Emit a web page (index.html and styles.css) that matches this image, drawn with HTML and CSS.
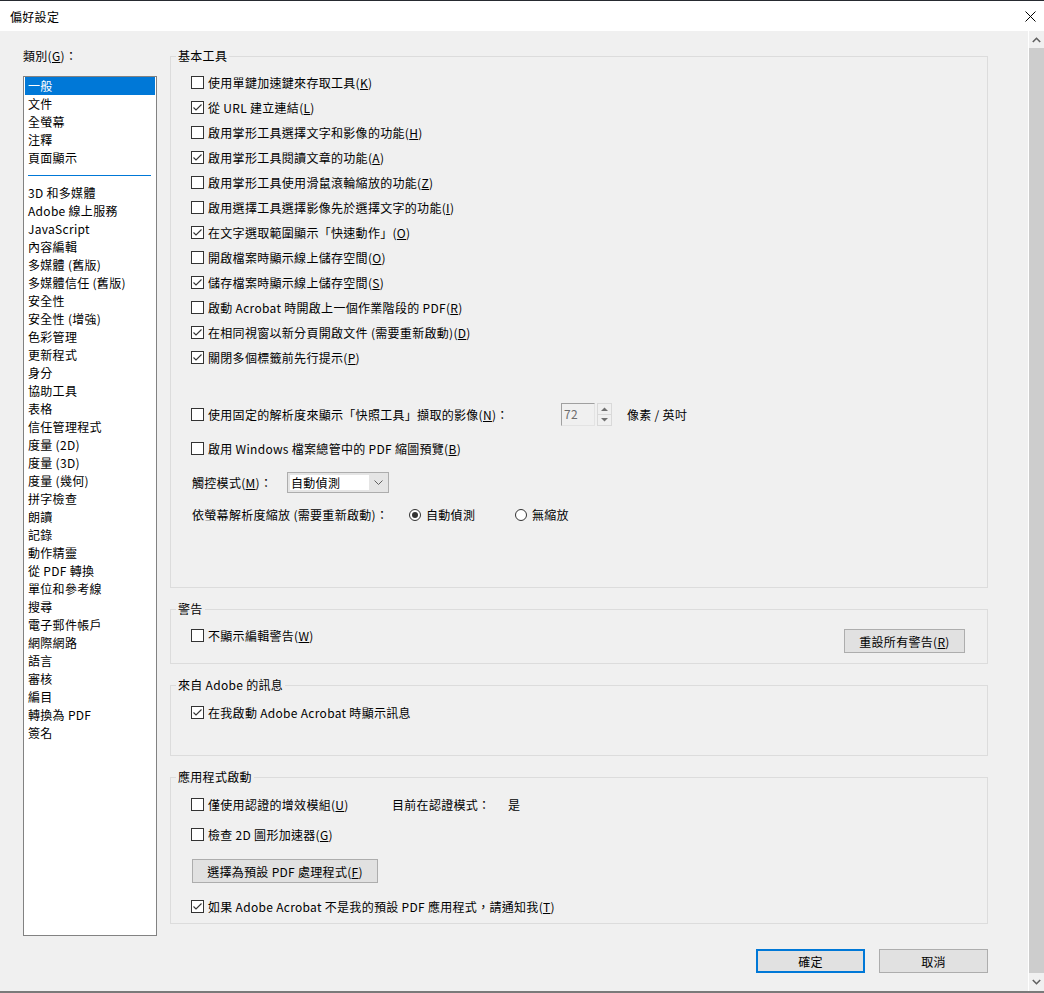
FILE: index.html
```html
<!DOCTYPE html>
<html lang="zh-Hant">
<head>
<meta charset="utf-8">
<title>偏好設定</title>
<link rel="stylesheet" href="styles.css">
</head>
<body>
<div class="window">
  <div class="titlebar">
    <span class="title">偏好設定</span>
    <span class="close"><svg width="11" height="11" viewBox="0 0 11 11"><path d="M0.5 0.5L10.5 10.5M10.5 0.5L0.5 10.5" stroke="#000" stroke-width="1" fill="none"/></svg></span>
  </div>
  <div class="client">
    <div class="main">
      <div class="left">
        <div class="cat-label">類別(<u>G</u>)：</div>
        <div class="listbox">
          <div class="item sel">一般</div>
          <div class="item">文件</div>
          <div class="item">全螢幕</div>
          <div class="item">注釋</div>
          <div class="item">頁面顯示</div>
          <div class="sep"><span class="sep-line"></span></div>
          <div class="item">3D 和多媒體</div>
          <div class="item">Adobe 線上服務</div>
          <div class="item">JavaScript</div>
          <div class="item">內容編輯</div>
          <div class="item">多媒體 (舊版)</div>
          <div class="item">多媒體信任 (舊版)</div>
          <div class="item">安全性</div>
          <div class="item">安全性 (增強)</div>
          <div class="item">色彩管理</div>
          <div class="item">更新程式</div>
          <div class="item">身分</div>
          <div class="item">協助工具</div>
          <div class="item">表格</div>
          <div class="item">信任管理程式</div>
          <div class="item">度量 (2D)</div>
          <div class="item">度量 (3D)</div>
          <div class="item">度量 (幾何)</div>
          <div class="item">拼字檢查</div>
          <div class="item">朗讀</div>
          <div class="item">記錄</div>
          <div class="item">動作精靈</div>
          <div class="item">從 PDF 轉換</div>
          <div class="item">單位和參考線</div>
          <div class="item">搜尋</div>
          <div class="item">電子郵件帳戶</div>
          <div class="item">網際網路</div>
          <div class="item">語言</div>
          <div class="item">審核</div>
          <div class="item">編目</div>
          <div class="item">轉換為 PDF</div>
          <div class="item">簽名</div>
        </div>
      </div>

      <div class="right">
        <fieldset class="group">
          <legend>基本工具</legend>
          <div class="g1">
            <div class="row"><span class="cb"></span>使用單鍵加速鍵來存取工具(<u>K</u>)</div>
            <div class="row"><span class="cb on"><svg width="11" height="11" viewBox="0 0 11 11"><path d="M1.5 5.5L4 8L9.5 2.5" stroke="#333" stroke-width="1.1" fill="none"/></svg></span>從 URL 建立連結(<u>L</u>)</div>
            <div class="row"><span class="cb"></span>啟用掌形工具選擇文字和影像的功能(<u>H</u>)</div>
            <div class="row"><span class="cb on"><svg width="11" height="11" viewBox="0 0 11 11"><path d="M1.5 5.5L4 8L9.5 2.5" stroke="#333" stroke-width="1.1" fill="none"/></svg></span>啟用掌形工具閱讀文章的功能(<u>A</u>)</div>
            <div class="row"><span class="cb"></span>啟用掌形工具使用滑鼠滾輪縮放的功能(<u>Z</u>)</div>
            <div class="row"><span class="cb"></span>啟用選擇工具選擇影像先於選擇文字的功能(<u>I</u>)</div>
            <div class="row"><span class="cb on"><svg width="11" height="11" viewBox="0 0 11 11"><path d="M1.5 5.5L4 8L9.5 2.5" stroke="#333" stroke-width="1.1" fill="none"/></svg></span>在文字選取範圍顯示「快速動作」(<u>O</u>)</div>
            <div class="row"><span class="cb"></span>開啟檔案時顯示線上儲存空間(<u>O</u>)</div>
            <div class="row"><span class="cb on"><svg width="11" height="11" viewBox="0 0 11 11"><path d="M1.5 5.5L4 8L9.5 2.5" stroke="#333" stroke-width="1.1" fill="none"/></svg></span>儲存檔案時顯示線上儲存空間(<u>S</u>)</div>
            <div class="row"><span class="cb"></span>啟動 Acrobat 時開啟上一個作業階段的 PDF(<u>R</u>)</div>
            <div class="row"><span class="cb on"><svg width="11" height="11" viewBox="0 0 11 11"><path d="M1.5 5.5L4 8L9.5 2.5" stroke="#333" stroke-width="1.1" fill="none"/></svg></span>在相同視窗以新分頁開啟文件 (需要重新啟動)(<u>D</u>)</div>
            <div class="row"><span class="cb on"><svg width="11" height="11" viewBox="0 0 11 11"><path d="M1.5 5.5L4 8L9.5 2.5" stroke="#333" stroke-width="1.1" fill="none"/></svg></span>關閉多個標籤前先行提示(<u>P</u>)</div>

            <div class="row snap">
              <span class="snap-label"><span class="cb"></span>使用固定的解析度來顯示「快照工具」擷取的影像(<u>N</u>)：</span>
              <span class="spin-box">72</span>
              <span class="spin-btns">
                <span class="spin-btn"><svg width="7" height="4" viewBox="0 0 7 4"><path d="M0 4L3.5 0.5L7 4Z" fill="#707070"/></svg></span>
                <span class="spin-btn"><svg width="7" height="4" viewBox="0 0 7 4"><path d="M0 0L3.5 3.5L7 0Z" fill="#707070"/></svg></span>
              </span>
              <span class="unit">像素 / 英吋</span>
            </div>
            <div class="row win"><span class="cb"></span>啟用 Windows 檔案總管中的 PDF 縮圖預覽(<u>B</u>)</div>
            <div class="row touch">
              <span class="touch-label">觸控模式(<u>M</u>)：</span>
              <span class="combo"><span class="combo-val">自動偵測</span><svg class="combo-arrow" width="9" height="5" viewBox="0 0 9 5"><path d="M0.5 0.5L4.5 4.5L8.5 0.5" stroke="#606060" stroke-width="1" fill="none"/></svg></span>
            </div>
            <div class="row scale">
              <span class="scale-label">依螢幕解析度縮放 (需要重新啟動)：</span>
              <span class="radio-item first"><span class="radio on"><span class="dot"></span></span>自動偵測</span>
              <span class="radio-item"><span class="radio"></span>無縮放</span>
            </div>
          </div>
        </fieldset>

        <fieldset class="group gap">
          <legend>警告</legend>
          <div class="g2">
            <div class="row"><span class="cb"></span>不顯示編輯警告(<u>W</u>)</div>
            <button class="btn reset">重設所有警告(<u>R</u>)</button>
          </div>
        </fieldset>

        <fieldset class="group gap">
          <legend>來自 Adobe 的訊息</legend>
          <div class="g3">
            <div class="row"><span class="cb on"><svg width="11" height="11" viewBox="0 0 11 11"><path d="M1.5 5.5L4 8L9.5 2.5" stroke="#333" stroke-width="1.1" fill="none"/></svg></span>在我啟動 Adobe Acrobat 時顯示訊息</div>
          </div>
        </fieldset>

        <fieldset class="group gap">
          <legend>應用程式啟動</legend>
          <div class="g4">
            <div class="row">
              <span class="cert-label"><span class="cb"></span>僅使用認證的增效模組(<u>U</u>)</span>
              <span class="cert-mode">目前在認證模式：</span>
              <span>是</span>
            </div>
            <div class="row r2"><span class="cb"></span>檢查 2D 圖形加速器(<u>G</u>)</div>
            <button class="btn pdfbtn">選擇為預設 PDF 處理程式(<u>F</u>)</button>
            <div class="row r4"><span class="cb on"><svg width="11" height="11" viewBox="0 0 11 11"><path d="M1.5 5.5L4 8L9.5 2.5" stroke="#333" stroke-width="1.1" fill="none"/></svg></span>如果 Adobe Acrobat 不是我的預設 PDF 應用程式，請通知我(<u>T</u>)</div>
          </div>
        </fieldset>

        <div class="actions">
          <button class="btn dlg default">確定</button>
          <button class="btn dlg">取消</button>
        </div>
      </div>
    </div>
    <div class="scrollbar">
      <div class="sb-btn up"><svg width="9" height="6" viewBox="0 0 9 6"><path d="M0.8 5L4.5 1.3L8.2 5" stroke="#606060" stroke-width="1.6" fill="none"/></svg></div>
      <div class="sb-thumb"></div>
      <div class="sb-btn down"><svg width="9" height="6" viewBox="0 0 9 6"><path d="M0.8 1L4.5 4.7L8.2 1" stroke="#606060" stroke-width="1.6" fill="none"/></svg></div>
    </div>
  </div>
</div>
</body>
</html>
```

FILE: styles.css
```css
* { box-sizing: border-box; }
html, body { margin: 0; padding: 0; }
body {
  width: 1044px;
  height: 993px;
  overflow: hidden;
  background: #f0f0f0;
  font-family: "Noto Sans CJK TC", "Noto Sans", sans-serif;
  font-size: 12px;
  letter-spacing: 0.3px;
  color: #000;
}
u { text-decoration: underline; text-underline-offset: 1px; }

.window {
  display: flex;
  flex-direction: column;
  height: 993px;
  border-bottom: 2px solid #7a7a7a;
}
.titlebar {
  height: 31px;
  flex: none;
  background: #fff;
  border-top: 1px solid #262a30;
  display: flex;
  align-items: center;
  justify-content: space-between;
  padding-left: 10px;
}
.close {
  width: 28px;
  height: 30px;
  display: flex;
  align-items: center;
  justify-content: center;
}

.client { flex: 1; display: flex; min-height: 0; }
.main { flex: 1; display: flex; }

.scrollbar {
  width: 16px;
  border-left: 1px solid #fff;
  display: flex;
  flex-direction: column;
}
.sb-btn { height: 17px; display: flex; align-items: center; justify-content: center; }
.sb-btn.down { height: 18px; }
.sb-thumb { flex: 1; background: #cdcdcd; }

/* left */
.left {
  width: 134px;
  margin-left: 23px;
  padding-top: 17px;
  display: flex;
  flex-direction: column;
}
.cat-label { line-height: 16px; height: 16px; }
.listbox {
  margin-top: 12px;
  height: 860px;
  background: #fff;
  border: 1px solid #828282;
  padding: 0 1px;
}
.item {
  height: 18px;
  line-height: 18px;
  padding-left: 3px;
  white-space: nowrap;
}
.item.sel { background: #0078d7; color: #fff; }
.sep { height: 17px; display: flex; align-items: center; padding: 0 4px 0 3px; }
.sep-line { flex: 1; height: 1px; background: #0078d7; }

/* right */
.right {
  width: 818px;
  margin-left: 13px;
  padding-top: 17px;
  display: flex;
  flex-direction: column;
}
fieldset.group {
  margin: 0;
  padding: 0;
  border: 1px solid #dcdcdc;
  min-width: 0;
}
fieldset.group.gap { margin-top: 13px; }
legend {
  padding: 0 2px;
  margin-left: 5px;
  line-height: 16px;
}
.row {
  height: 25px;
  display: flex;
  align-items: center;
  white-space: nowrap;
}
.cb {
  width: 13px;
  height: 13px;
  border: 1px solid #333;
  background: #fff;
  margin-right: 4px;
  flex: none;
  display: inline-flex;
  align-items: center;
  justify-content: center;
}
.cb svg { display: block; }

.g1 { height: 523px; padding: 6px 0 0 20px; }
.row.snap { margin-top: 32px; }
.snap-label { width: 370px; display: flex; align-items: center; }
.spin-box {
  width: 34px;
  height: 23px;
  border: 1px solid;
  border-color: #a0a0a0 #e3e3e3 #e3e3e3 #a0a0a0;
  color: #6d6d6d;
  padding-left: 2px;
  line-height: 20px;
}
.spin-btns {
  margin-left: 2px;
  width: 15px;
  height: 23px;
  display: flex;
  flex-direction: column;
}
.spin-btn {
  flex: 1;
  border: 1px solid #d9d9d9;
  display: flex;
  align-items: center;
  justify-content: center;
}
.spin-btn + .spin-btn { border-top: none; }
.unit { margin-left: 15px; }
.row.win { margin-top: 9px; }
.row.touch { margin-top: 9px; padding-left: 1px; }
.touch-label { width: 95px; }
.combo {
  width: 102px;
  height: 21px;
  border: 1px solid #adadad;
  background: #e5e5e5;
  padding: 2px;
  display: flex;
  align-items: center;
}
.combo-val {
  width: 79px;
  height: 15px;
  background: #fff;
  line-height: 15px;
  padding-left: 1px;
}
.combo-arrow { margin-left: 5px; }
.row.scale { margin-top: 7px; padding-left: 1px; }
.scale-label { width: 217px; }
.radio-item { display: flex; align-items: center; }
.radio-item.first { width: 106px; }
.radio {
  width: 12px;
  height: 12px;
  border: 1px solid #333;
  border-radius: 50%;
  background: #fff;
  margin-right: 5px;
  display: inline-flex;
  align-items: center;
  justify-content: center;
}
.dot { width: 6px; height: 6px; border-radius: 50%; background: #333; }

.btn {
  font: inherit;
  letter-spacing: inherit;
  color: #000;
  background: #e1e1e1;
  border: 1px solid #adadad;
  height: 24px;
  padding: 0;
  margin: 0;
  display: flex;
  align-items: center;
  justify-content: center;
}
.g2 {
  display: flex;
  justify-content: space-between;
  align-items: flex-start;
  padding: 6px 22px 10px 20px;
}
.btn.reset { width: 121px; margin-top: 6px; }
.g3 { padding: 7px 0 30px 20px; }
.g4 { padding: 7px 0 4px 20px; display: flex; flex-direction: column; align-items: flex-start; }
.cert-label { width: 201px; display: flex; align-items: center; }
.cert-mode { width: 116px; }
.row.r2 { margin-top: 5px; }
.btn.pdfbtn { width: 186px; margin-top: 12px; margin-left: 1px; }
.row.r4 { margin-top: 11px; }

.actions {
  margin-top: 25px;
  display: flex;
  justify-content: flex-end;
  gap: 14px;
}
.btn.dlg { width: 109px; }
.btn.default { border: 2px solid #0078d7; }
```
